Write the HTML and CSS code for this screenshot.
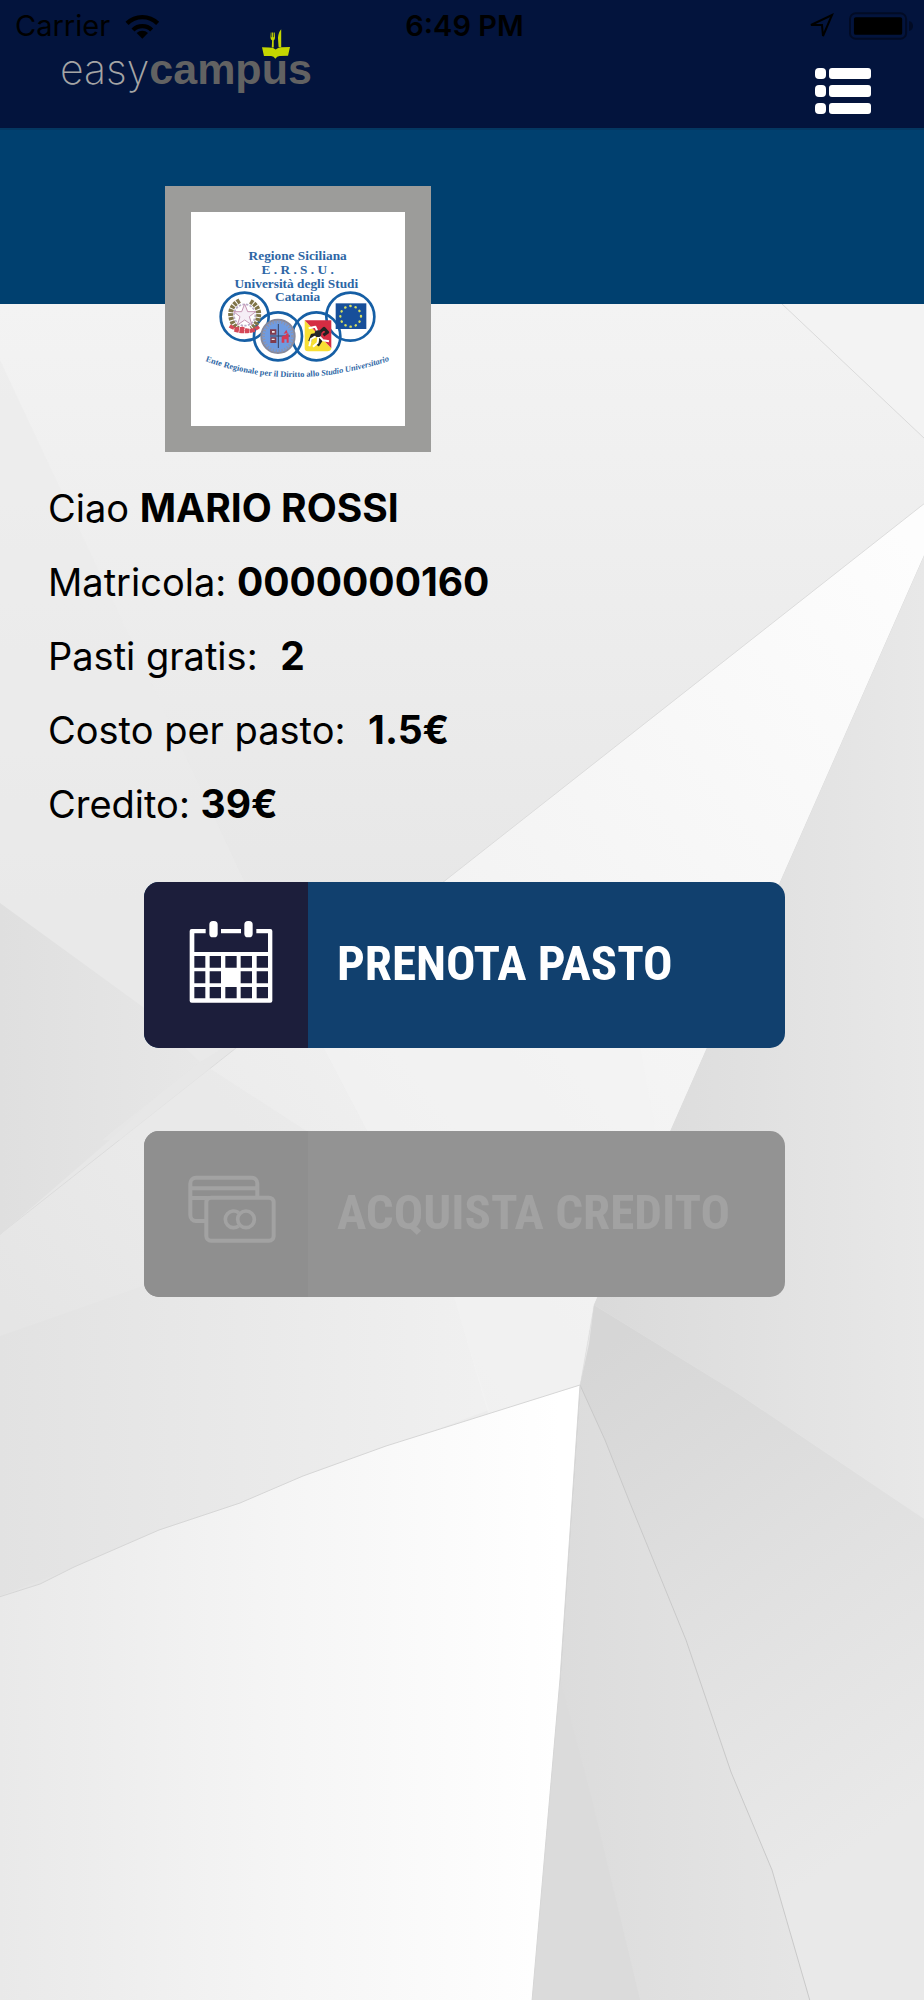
FILE: index.html
```html
<!DOCTYPE html>
<html lang="it">
<head>
<meta charset="utf-8">
<meta name="viewport" content="width=device-width, initial-scale=1">
<title>easycampus</title>
<link rel="stylesheet" href="styles.css">
</head>
<body>
<div class="page">
  <svg class="backdrop" viewBox="0 0 924 2000" preserveAspectRatio="none" aria-hidden="true">
    <defs>
      <linearGradient id="top" x1="0" y1="304" x2="0" y2="900" gradientUnits="userSpaceOnUse"><stop offset="0" stop-color="#f3f3f3"/><stop offset="1" stop-color="#e7e7e7"/></linearGradient>
      <linearGradient id="band" x1="0" y1="1300" x2="924" y2="560" gradientUnits="userSpaceOnUse"><stop offset="0" stop-color="#e5e5e5"/><stop offset=".5" stop-color="#f3f3f3"/><stop offset="1" stop-color="#fdfdfd"/></linearGradient>
      <linearGradient id="white" x1="0" y1="0" x2="560" y2="0" gradientUnits="userSpaceOnUse"><stop offset="0" stop-color="#e9e9e9"/><stop offset=".5" stop-color="#f5f5f5"/><stop offset="1" stop-color="#ffffff"/></linearGradient>
      <linearGradient id="right" x1="600" y1="0" x2="924" y2="0" gradientUnits="userSpaceOnUse"><stop offset="0" stop-color="#dadada"/><stop offset="1" stop-color="#e8e8e8"/></linearGradient>
      <linearGradient id="fold" x1="600" y1="1350" x2="924" y2="1800" gradientUnits="userSpaceOnUse"><stop offset="0" stop-color="#d6d6d6"/><stop offset=".5" stop-color="#e0e0e0"/><stop offset="1" stop-color="#e9e9e9"/></linearGradient>
      <linearGradient id="wedge" x1="540" y1="0" x2="800" y2="0" gradientUnits="userSpaceOnUse"><stop offset="0" stop-color="#dbdbdb"/><stop offset="1" stop-color="#e5e5e5"/></linearGradient>
      <linearGradient id="side" x1="0" y1="0" x2="300" y2="0" gradientUnits="userSpaceOnUse"><stop offset="0" stop-color="#dfdfdf"/><stop offset="1" stop-color="#ebebeb"/></linearGradient>
      <linearGradient id="low" x1="0" y1="1300" x2="580" y2="1300" gradientUnits="userSpaceOnUse"><stop offset="0" stop-color="#e2e2e2"/><stop offset="1" stop-color="#f3f3f3"/></linearGradient>
    </defs>
    <path fill="url(#top)" d="M0 0H924V2000H0z"/>
    <path fill="#ebebeb" fill-opacity=".6" d="M0 360L245 883L300 1000L200 1062L0 903z"/>
    <path fill="#f3f3f3" stroke="#dadada" d="M781 303L925 439V303z"/>
    <path fill="url(#band)" stroke="#dcdcdc" d="M925 503L442 883L236 1048L-1 1235V1600L580 1385L594 1305L925 554z"/>
    <path fill="url(#low)" d="M0 1336L143 1286L454 1297L489 1410L300 1480L0 1596z"/>
    <path fill="#f2f2f2" d="M324 1048L454 1297L489 1417L580 1385L594 1305L660 1155L640 1048z" fill-opacity=".7"/>
    <path fill="url(#side)" d="M0 903L143 1007L200 1062L0 1235z"/>
    <path fill="#e8e8e8" d="M200 1062L320 1140H102z" fill-opacity=".6"/>
    <path fill="url(#right)" d="M925 554L780 883L594 1305L737 1393L925 1519z"/>
    <path fill="url(#fold)" d="M594 1305L737 1393L924 1519V2000H532L580 1385L589 1344z"/>
    <path fill="url(#wedge)" stroke="#c9c9c9" d="M580 1385L605 1440L630 1503L686 1640L731 1772L772 1870L810 2001H532L560 1679z"/>
    <path fill="#dbdbdb" d="M560 1679L592 1800L640 2000H532z"/>
    <path fill="url(#white)" stroke="#d6d6d6" d="M580 1385L386 1446L303 1476L240 1503L159 1530L74 1567L40 1584L-1 1597V2001H532L560 1679z"/>
  </svg>

  <header class="topbar">
    <div class="status">
      <div class="status-left">
        <span>Carrier</span>
        <svg class="wifi" viewBox="375 36 105 75" aria-hidden="true">
          <path d="M427 110l17-17a25 25 0 0 0-34 0z"/>
          <path fill="none" stroke="#000" stroke-width="13" d="M399 84a40 40 0 0 1 56 0M381 64a66 66 0 0 1 92 0"/>
        </svg>
      </div>
      <time class="clock">6:49 PM</time>
      <div class="status-right">
        <svg class="arrow" viewBox="0 0 26 26" aria-hidden="true"><path fill="none" stroke="#000" stroke-width="2" d="M3 12L24 2L15 23L14 12z"/></svg>
        <svg class="battery" viewBox="0 0 66 28" aria-hidden="true">
          <rect x="1" y="1" width="57" height="26" rx="6" fill="none" stroke="#020b24" stroke-width="2"/>
          <rect x="5" y="5" width="49" height="18" rx="2"/>
          <path fill="#020b24" d="M61 9q4 1 4 5t-4 5z"/>
        </svg>
      </div>
    </div>
    <div class="brandbar">
      <a class="brand" href="#"><span class="brand-easy">easy</span><span class="brand-campus">campus</span><svg class="brand-mark" viewBox="786 86 86 90" aria-hidden="true"><path fill="#c4d600" d="M786 141l22 1q14 0 20 6q6-6 18-7l26-1l-6 27l-26 1q-8 1-13 8q-5-7-13-8h-22zM816 142l1-22q-5-3-5-9l1-15h2v14h2V96h3v14h2V96h3l1 15q0 6-4 9v22zM837 141l-2-29q2-19 10-26v55z"/></svg></a>
      <button class="menu" type="button" aria-label="Menu">
        <svg viewBox="0 0 58 48" aria-hidden="true"><g fill="#fff"><rect x="1" y="1" width="11" height="11" rx="4"/><rect x="15" y="1" width="42" height="11" rx="3"/><rect x="1" y="18" width="11" height="12" rx="4"/><rect x="15" y="18" width="42" height="12" rx="3"/><rect x="1" y="36" width="11" height="11" rx="4"/><rect x="15" y="36" width="42" height="11" rx="3"/></g></svg>
      </button>
    </div>
  </header>

  <main>
    <section class="hero">
      <div class="crest">
        <svg viewBox="92 96 642 642" role="img" aria-label="Regione Siciliana E.R.S.U. Università degli Studi Catania">
          <g class="crest-title" text-anchor="middle">
            <text x="412" y="241">Regione Siciliana</text>
            <text x="412" y="282">E . R . S . U .</text>
            <text x="408" y="323">Università degli Studi</text>
            <text x="412" y="364">Catania</text>
          </g>
          <g fill="none" stroke="#165fa5" stroke-width="8">
            <circle cx="253" cy="410" r="72"/><circle cx="570" cy="410" r="72"/>
            <circle cx="468" cy="469" r="72"/><circle cx="353" cy="469" r="72"/>
          </g>
          <g fill="none">
            <path stroke="#807549" stroke-width="15" stroke-dasharray="9 3" d="M238 362q-36 20-24 58q5 17 20 26M270 364q34 20 22 56q-5 16-20 26"/>
            <circle cx="253" cy="405" r="32" stroke="#b9adc9" stroke-width="5" stroke-dasharray="7 4"/>
            <path fill="#f5eef6" stroke="#c797b4" stroke-width="3" d="M253 372l9 23h24l-19 15l8 25l-22-15l-22 15l8-25l-19-15h24z"/>
            <path stroke="#d54858" stroke-width="10" stroke-dasharray="14 2" d="M208 438q18 12 38 7q26 14 50-5M222 450q26 9 62 1"/>
          </g>
          <circle cx="353" cy="469" r="50" fill="#6f9be0" stroke="#87899b" stroke-width="6"/>
          <circle cx="353" cy="469" r="44" fill="none" stroke="#8d93ab" stroke-width="9" stroke-dasharray="4 5"/>
          <path stroke="#34405e" stroke-width="3" d="M354 432v72M329 468h60"/>
          <path fill="#813b4c" d="M329 448h19v16h-19zM330 472h18v17h-18z"/><path fill="#eee" d="M335 453h8v5h-8zM334 476h9v4h-9z"/>
          <path fill="#d63953" d="M364 488v-16q3-7 12-6q3-9 9-5v27h-6v-10h-7v10zM370 461l8-12l4 10z"/>
          <path fill="#f8df34" d="M433 421V505q0 9 10 9H501q11 0 12-9z"/><path fill="#d52d43" d="M433 421H513V505z"/>
          <g fill="none" stroke-linejoin="round"><path stroke="#222" stroke-width="9" d="M473 462l18-17l11 12l-13 9M473 463l-18 3l-7 18M474 464l8 17l-10 16"/><path stroke="#fff" stroke-width="6" d="M473 458l-8-18l-20 5M470 467l-18 10l-5 22M476 468l12 13l18 3M474 470l-2 18l-14 12"/></g>
          <circle cx="473" cy="461" r="10" fill="#27272c"/>
          <path fill="#174f9a" d="M526 370H618V447H526z"/>
          <circle cx="571" cy="409" r="31" fill="none" stroke="#d7df61" stroke-width="7" stroke-linecap="round" stroke-dasharray="1 15"/>
          <path id="motto" fill="none" d="M135 543Q400 642 700 538"/>
          <text class="crest-motto"><textPath href="#motto">Ente Regionale per il Diritto allo <tspan class="slant">Studio Universitario</tspan></textPath></text>
        </svg>
      </div>
    </section>

    <section class="profile">
      <p>Ciao <strong>MARIO ROSSI</strong></p>
      <p>Matricola: <strong>0000000160</strong></p>
      <p>Pasti gratis: <strong class="far">2</strong></p>
      <p>Costo per pasto: <strong class="far">1.5€</strong></p>
      <p>Credito: <strong>39€</strong></p>
    </section>

    <div class="actions">
      <button class="action" type="button">
        <span class="action-icon">
          <svg viewBox="0 0 330 330" aria-hidden="true">
            <rect x="29" y="57" width="248" height="221" rx="6" fill="#fff"/>
            <g fill="#1c1e3b"><path d="M43 70H264V126H43zM77 50H123V90H77zM183 50H229V90H183z"/>
            <path d="M43 138h33v35H43zM89 138h34v35H89zM136 138h34v35h-34zM182 138h34v35h-34zM230 138h34v35h-34zM43 184h33v36H43zM89 184h34v36H89zM182 184h34v36h-34zM230 184h34v36h-34zM43 231h33v34H43zM89 231h34v34H89zM136 231h34v34h-34zM182 231h34v34h-34zM230 231h34v34h-34z"/></g>
            <g fill="#fff"><rect x="88" y="33" width="25" height="49" rx="11"/><rect x="193" y="33" width="25" height="49" rx="11"/></g>
          </svg>
        </span>
        <span class="action-label">PRENOTA PASTO</span>
      </button>
      <button class="action" type="button" disabled>
        <span class="action-icon">
          <svg viewBox="0 0 330 330" aria-hidden="true">
            <g fill="#8f8f8f" stroke="#a2a2a2" stroke-width="12"><rect x="31" y="56" width="201" height="130" rx="17"/><path d="M31 88H232M31 117H232"/><rect x="79" y="116" width="202" height="129" rx="14"/></g>
            <g fill="none" stroke="#a2a2a2" stroke-width="11"><circle cx="198" cy="181" r="25"/><path d="M176 161a25 25 0 1 0 0 40"/></g>
          </svg>
        </span>
        <span class="action-label">ACQUISTA CREDITO</span>
      </button>
    </div>
  </main>
</div>
</body>
</html>
```
FILE: styles.css
```css
* { box-sizing: border-box; }
body { margin: 0; font-family: Inter, "Liberation Sans", sans-serif; color: #000; }
svg { display: block; }
.page { position: relative; min-height: 100vh; overflow: hidden; isolation: isolate; }
.backdrop { position: absolute; inset: 0; width: 100%; height: 100%; z-index: -1; }

.topbar { height: 128px; background: #03143d; }
.status { display: grid; grid-template-columns: 1fr auto 1fr; align-items: center; height: 52px; padding: 0 10px 0 15px; font-size: 29px; line-height: 52px; }
.status-left, .status-right { display: flex; align-items: center; gap: 15px; }
.status-right { justify-content: flex-end; }
.wifi { width: 35px; height: 25px; }
.clock { font-weight: 600; }
.arrow { width: 26px; height: 26px; }
.battery { width: 65px; height: 28px; }
.brandbar { display: flex; justify-content: space-between; align-items: flex-start; height: 76px; padding: 0 52px 0 60px; }
.brand { position: relative; display: flex; align-items: baseline; line-height: 34px; text-decoration: none; }
.brand-easy { font-size: 41px; font-weight: 200; color: #a5a5a5; }
.brand-campus { font-family: "Liberation Sans", sans-serif; font-size: 43px; font-weight: 700; color: #626262; }
.brand-mark { position: absolute; right: 22px; top: -23px; width: 28px; height: 30px; }
.menu { margin-top: 15px; padding: 0; border: 0; background: none; }
.menu svg { width: 58px; height: 48px; }

.hero { height: 176px; padding: 56px 0 0 165px; background: #00406f; border-top: 2px solid #043862; }
.crest { width: 266px; height: 266px; padding: 26px; background: #9c9c9a; }
.crest svg { width: 214px; height: 214px; background: #fff; }
.crest-title, .crest-motto { font-family: "Liberation Serif", serif; fill: #2d66a5; }
.crest-title { font-size: 40px; font-weight: 700; }
.crest-motto { font-size: 25px; font-weight: 700; }
.slant { font-style: italic; }

.profile { padding: 167px 48px 0; font-size: 38px; line-height: 74px; }
.profile p { margin: 0; height: 74px; }
.profile strong { font-size: 39px; line-height: 1; }
.profile .far { margin-left: 12px; }

.actions { display: flex; flex-direction: column; gap: 83px; padding: 41px 139px 80px 144px; }
.action { display: flex; height: 166px; padding: 0; border: 0; border-radius: 15px; overflow: hidden; background: #11406e; color: #fff; font-family: "Roboto Condensed", "Liberation Sans Narrow", Roboto, sans-serif; font-size: 49px; font-weight: 700; }
.action-icon { display: flex; align-items: center; flex: 0 0 164px; height: 100%; padding-left: 36px; background: #1c1e3b; }
.action-icon svg { width: 110px; height: 110px; }
.action-label { align-self: center; padding: 0 0 4px 29px; white-space: nowrap; }
.action:disabled { background: #939393; color: #a2a2a2; }
.action:disabled .action-icon { background: #8f8f8f; }
```
